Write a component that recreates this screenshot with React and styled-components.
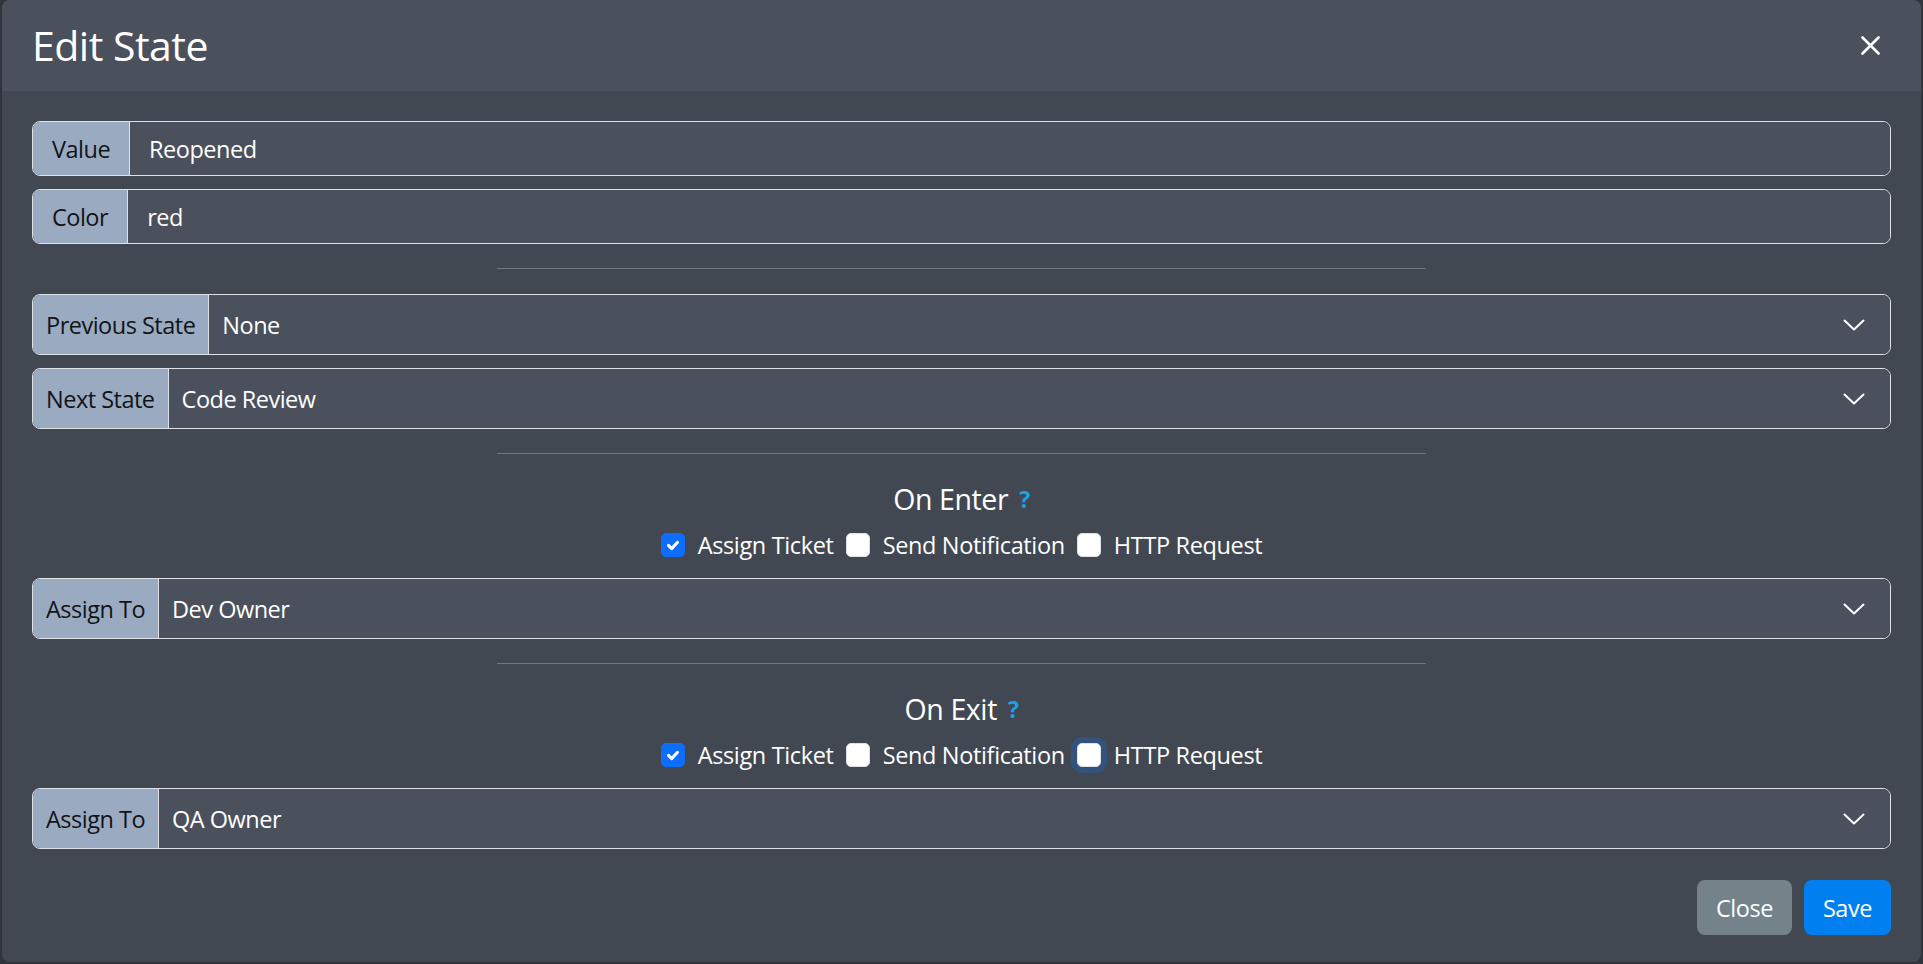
import React from "react";
import styled, { createGlobalStyle } from "styled-components";

const GlobalStyle = createGlobalStyle`
  html, body {
    margin: 0;
    padding: 0;
    background: #30353b;
  }
  body {
    font-family: "Open Sans", "Noto Sans", sans-serif;
    -webkit-font-smoothing: antialiased;
  }
  * {
    box-sizing: border-box;
  }
`;

const Modal = styled.div`
  margin: 0 2px;
  height: 962px;
  background: #414852;
  border-radius: 8px;
  overflow: hidden;
  display: flex;
  flex-direction: column;
`;

const Header = styled.div`
  height: 91px;
  flex: none;
  background: #4a505c;
  display: flex;
  align-items: center;
  justify-content: space-between;
  padding: 0 41px 0 30px;
`;

const Title = styled.h3`
  margin: 0;
  font-size: 41px;
  font-weight: 400;
  letter-spacing: -0.5px;
  line-height: 1;
  color: #fff;
`;

const CloseX = styled.button`
  border: 0;
  padding: 0;
  background: none;
  width: 19px;
  height: 19px;
  display: flex;
  cursor: pointer;
`;

const Body = styled.div`
  padding: 30px 30px 0;
  display: flex;
  flex-direction: column;
`;

const Group = styled.div`
  display: flex;
  height: ${(p) => (p.$tall ? 61 : 55)}px;
  margin-top: ${(p) => p.$top || 0}px;
  border: 1px solid #dee2e6;
  border-radius: 8px;
  overflow: hidden;
  font-size: 23.5px;
  letter-spacing: -0.5px;
`;

const Addon = styled.span`
  display: flex;
  align-items: center;
  padding: 0 ${(p) => p.$pad}px;
  background: #9aabc1;
  color: #111417;
  border-right: 1px solid #dee2e6;
  white-space: nowrap;
`;

const Input = styled.input`
  flex: 1;
  min-width: 0;
  border: 0;
  outline: none;
  margin: 0;
  padding: 0 19px;
  background: #4a505c;
  color: #fff;
  font: inherit;
  letter-spacing: inherit;
`;

const SelectBox = styled.div`
  flex: 1;
  display: flex;
  align-items: center;
  justify-content: space-between;
  padding: 0 25px 0 13px;
  background: #4a505c;
  color: #fff;
`;

const Divider = styled.hr`
  width: 50%;
  margin: ${(p) => p.$top}px auto 0;
  border: 0;
  border-top: 1px solid rgba(255, 255, 255, 0.25);
  height: 0;
`;

const SectionTitle = styled.div`
  height: 36px;
  margin-top: 27px;
  display: flex;
  align-items: center;
  justify-content: center;
  gap: 11px;
  color: #fff;
  font-size: 28.5px;
  letter-spacing: -0.4px;
`;

const Help = styled.span`
  color: #1da1e6;
  font-weight: 700;
  font-size: 23px;
  cursor: help;
`;

const CheckRow = styled.div`
  height: 38px;
  margin-top: 9px;
  display: flex;
  align-items: center;
  justify-content: center;
  gap: 12px;
`;

const CheckItem = styled.label`
  display: flex;
  align-items: center;
  gap: 13px;
  color: #fff;
  font-size: 23.5px;
  letter-spacing: -0.35px;
  cursor: pointer;
`;

const Box = styled.span`
  width: 24px;
  height: 24px;
  border-radius: 5px;
  display: flex;
  align-items: center;
  justify-content: center;
  background: ${(p) => (p.$checked ? "#0d6efd" : "#fff")};
  border: 1px solid ${(p) => (p.$checked ? "#0d6efd" : "#dee2e6")};
  box-shadow: ${(p) => (p.$focus ? "0 0 0 6px rgba(13, 110, 253, 0.25)" : "none")};
`;

const Footer = styled.div`
  margin-top: auto;
  padding: 0 30px 27px;
  display: flex;
  justify-content: flex-end;
  gap: 12px;
`;

const Button = styled.button`
  height: 55px;
  padding: 0 19px;
  border: 0;
  border-radius: 8px;
  background: ${(p) => (p.$primary ? "#007ff0" : "#74828a")};
  color: #fff;
  font-family: inherit;
  font-size: 23.5px;
  letter-spacing: -0.45px;
  cursor: pointer;
`;

const Chevron = () => (
  <svg width="22" height="12" viewBox="0 0 22 12">
    <polyline points="1.5,1.5 11,10.5 20.5,1.5" fill="none" stroke="#fff" strokeWidth="2" strokeLinecap="round" strokeLinejoin="round" />
  </svg>
);

const Check = ({ checked, focus, children }) => (
  <CheckItem>
    <Box $checked={checked} $focus={focus}>
      {checked && (
        <svg width="18" height="18" viewBox="0 0 20 20">
          <path d="M5 10.5l3.5 3.5L15 7" fill="none" stroke="#fff" strokeWidth="3.4" strokeLinecap="round" strokeLinejoin="round" />
        </svg>
      )}
    </Box>
    {children}
  </CheckItem>
);

const SelectGroup = ({ label, value, top }) => (
  <Group $tall $top={top}>
    <Addon $pad={13}>{label}</Addon>
    <SelectBox>
      {value}
      <Chevron />
    </SelectBox>
  </Group>
);

const Hook = ({ title, focusLast, assignee }) => (
  <>
    <SectionTitle>
      {title}
      <Help>?</Help>
    </SectionTitle>
    <CheckRow>
      <Check checked>Assign Ticket</Check>
      <Check>Send Notification</Check>
      <Check focus={focusLast}>HTTP Request</Check>
    </CheckRow>
    <SelectGroup label="Assign To" value={assignee} top={14} />
  </>
);

export default function App() {
  return (
    <>
      <GlobalStyle />
      <Modal>
        <Header>
          <Title>Edit State</Title>
          <CloseX aria-label="Close">
            <svg width="19" height="19" viewBox="0 0 19 19">
              <path d="M1.5 1.5l16 16M17.5 1.5l-16 16" stroke="#fff" strokeWidth="2.6" strokeLinecap="round" />
            </svg>
          </CloseX>
        </Header>
        <Body>
          <Group>
            <Addon $pad={19}>Value</Addon>
            <Input defaultValue="Reopened" />
          </Group>
          <Group $top={13}>
            <Addon $pad={19}>Color</Addon>
            <Input defaultValue="red" />
          </Group>
          <Divider $top={24} />
          <SelectGroup label="Previous State" value="None" top={25} />
          <SelectGroup label="Next State" value="Code Review" top={13} />
          <Divider $top={24} />
          <Hook title="On Enter" assignee="Dev Owner" />
          <Divider $top={24} />
          <Hook title="On Exit" assignee="QA Owner" focusLast />
        </Body>
        <Footer>
          <Button>Close</Button>
          <Button $primary>Save</Button>
        </Footer>
      </Modal>
    </>
  );
}
